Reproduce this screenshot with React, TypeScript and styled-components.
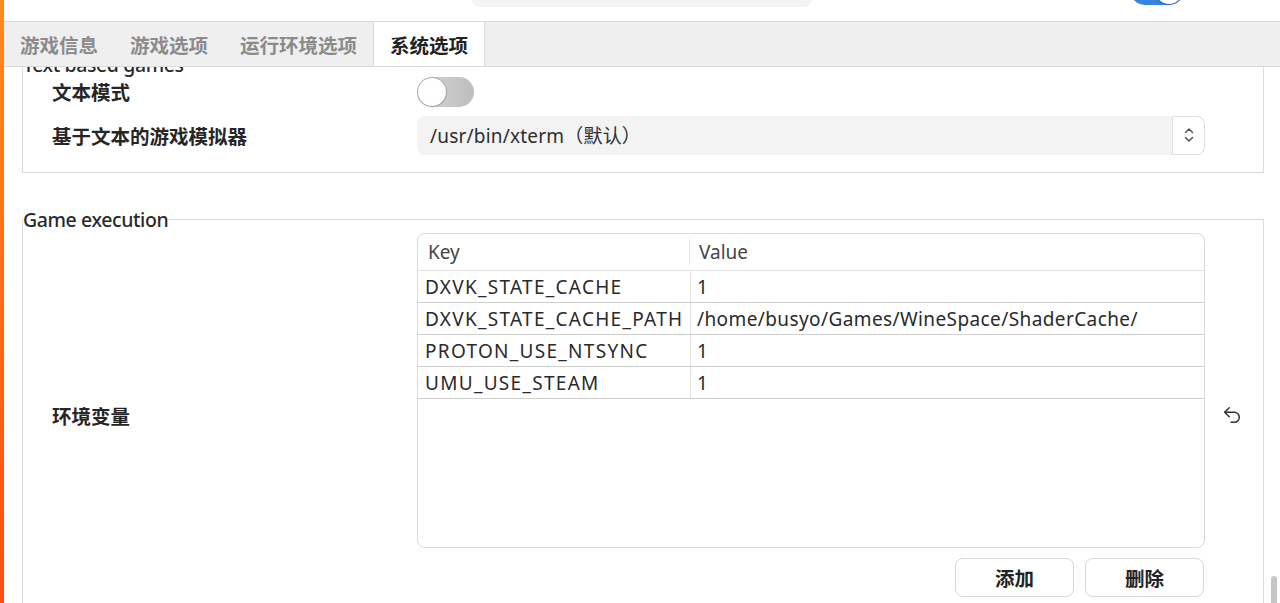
import styled, { createGlobalStyle } from 'styled-components';
import { Undo2 } from 'lucide-react';

const GlobalStyle = createGlobalStyle`
  html, body {
    margin: 0;
    padding: 0;
    height: 100%;
    overflow: hidden;
    background: #fff;
  }
  body {
    font-family: "Noto Sans", "Noto Sans CJK SC", sans-serif;
    color: #2a2a2a;
  }
  #root {
    height: 100%;
  }
`;

const envRows = [
  { key: 'DXVK_STATE_CACHE', value: '1' },
  { key: 'DXVK_STATE_CACHE_PATH', value: '/home/busyo/Games/WineSpace/ShaderCache/' },
  { key: 'PROTON_USE_NTSYNC', value: '1' },
  { key: 'UMU_USE_STEAM', value: '1' },
];

const tabs = ['游戏信息', '游戏选项', '运行环境选项', '系统选项'];

const App = () => {
  return (
    <Window>
      <GlobalStyle />
      <Stripe />
      <Main>
        <TopBar>
          <SearchField />
          <Switch $on $top>
            <Knob />
          </Switch>
        </TopBar>

        <TabBar>
          {tabs.map((t, i) => (
            <Tab key={t} $active={i === 3}>
              {t}
            </Tab>
          ))}
        </TabBar>

        <Scroller>
          <Content>
            <Group>
              <Legend>Text based games</Legend>
              <GroupBody $bottom={17.5} $top={2}>
                <Row>
                  <Label>文本模式</Label>
                  <Control>
                    <Switch>
                      <Knob />
                    </Switch>
                  </Control>
                  <Slot />
                </Row>
                <Row>
                  <Label>基于文本的游戏模拟器</Label>
                  <Combo>
                    <ComboField>/usr/bin/xterm（默认）</ComboField>
                    <Stepper>
                      <svg width="12" height="18" viewBox="0 0 12 18" fill="none">
                        <path d="M2.5 6.5 6 3l3.5 3.5" stroke="#555" strokeWidth="1.5" strokeLinecap="round" strokeLinejoin="round" />
                        <path d="M2.5 11.5 6 15l3.5-3.5" stroke="#555" strokeWidth="1.5" strokeLinecap="round" strokeLinejoin="round" />
                      </svg>
                    </Stepper>
                  </Combo>
                  <Slot />
                </Row>
              </GroupBody>
            </Group>

            <Group>
              <Legend>Game execution</Legend>
              <GroupBody $bottom={60} $top={3.5}>
                <Row>
                  <Label>环境变量</Label>
                  <Control $column>
                    <Table>
                      <HeadRow>
                        <HeadCell>Key</HeadCell>
                        <HeadSep />
                        <HeadCell $pad={9}>Value</HeadCell>
                      </HeadRow>
                      {envRows.map((r) => (
                        <BodyRow key={r.key}>
                          <Cell>{r.key}</Cell>
                          <Cell $value>{r.value}</Cell>
                        </BodyRow>
                      ))}
                    </Table>
                    <ButtonRow>
                      <Button>添加</Button>
                      <Button>删除</Button>
                    </ButtonRow>
                  </Control>
                  <Slot>
                    <Undo2 size={22} strokeWidth={1.6} color="#333" />
                  </Slot>
                </Row>
              </GroupBody>
            </Group>
          </Content>
          <ScrollThumb />
        </Scroller>
      </Main>
    </Window>
  );
};

const Window = styled.div`
  display: flex;
  height: 603px;
  overflow: hidden;
`;

const Stripe = styled.div`
  width: 4px;
  flex-shrink: 0;
  background: linear-gradient(180deg, #ff8a1e 0%, #ff6a16 50%, #ff4c14 100%);
`;

const Main = styled.div`
  flex: 1;
  min-width: 0;
  display: flex;
  flex-direction: column;
`;

const TopBar = styled.div`
  height: 21px;
  flex-shrink: 0;
  box-sizing: border-box;
  padding-bottom: 14px;
  display: flex;
  align-items: flex-end;
  overflow: hidden;
`;

const SearchField = styled.div`
  flex-shrink: 0;
  margin-left: 468px;
  width: 340px;
  height: 36px;
  border-radius: 8px;
  background: #f4f4f4;
`;

const Switch = styled.div<{ $on?: boolean; $top?: boolean }>`
  flex-shrink: 0;
  box-sizing: border-box;
  width: ${(p) => (p.$top ? 54 : 57)}px;
  height: 30px;
  border-radius: 15px;
  padding: 1px;
  display: flex;
  align-items: center;
  justify-content: ${(p) => (p.$on ? 'flex-end' : 'flex-start')};
  background: ${(p) =>
    p.$on ? '#3584e4' : 'linear-gradient(90deg, #d9d9d9 0%, #bcbcbc 100%)'};
  margin-left: ${(p) => (p.$top ? '318px' : '0')};
  margin-bottom: ${(p) => (p.$top ? '2px' : '0')};
`;

const Knob = styled.div`
  width: 28px;
  height: 28px;
  border-radius: 50%;
  background: #fff;
  box-shadow: 0 0 0 1px rgba(0, 0, 0, 0.18), 0 1px 2px rgba(0, 0, 0, 0.15);
`;

const TabBar = styled.div`
  height: 46px;
  flex-shrink: 0;
  box-sizing: border-box;
  display: flex;
  background: #efefef;
  border-top: 1px solid #d9d9d9;
  border-bottom: 1px solid #d9d9d9;
`;

const Tab = styled.div<{ $active?: boolean }>`
  display: flex;
  align-items: center;
  padding: 0 16px;
  font-size: 19.5px;
  font-weight: 700;
  color: ${(p) => (p.$active ? '#222' : '#8b8b8b')};
  background: ${(p) => (p.$active ? '#fff' : 'transparent')};
  border-left: ${(p) => (p.$active ? '1px solid #d9d9d9' : 'none')};
  border-right: ${(p) => (p.$active ? '1px solid #d9d9d9' : 'none')};
`;

const Scroller = styled.div`
  flex: 1;
  position: relative;
  overflow: hidden;
  padding: 0 16px 0 18px;
`;

const Content = styled.div`
  display: flex;
  flex-direction: column;
  gap: 36.5px;
  margin-top: -12.5px;
`;

const Group = styled.fieldset`
  margin: 0;
  padding: 0;
  min-width: 0;
  border: 1px solid #dcdcdc;
`;

const Legend = styled.legend`
  padding: 0;
  font-size: 19.5px;
  line-height: 20px;
  font-weight: 500;
  letter-spacing: -0.4px;
  color: #2a2a2a;
`;

const GroupBody = styled.div<{ $top: number; $bottom: number }>`
  display: flex;
  flex-direction: column;
  gap: 9px;
  padding: ${(p) => p.$top}px 0 ${(p) => p.$bottom}px 29px;
`;

const Row = styled.div`
  display: grid;
  grid-template-columns: 365px 1fr 58px;
  align-items: center;
`;

const Label = styled.div`
  font-size: 19.5px;
  font-weight: 700;
  color: #262626;
`;

const Control = styled.div<{ $column?: boolean }>`
  display: flex;
  flex-direction: ${(p) => (p.$column ? 'column' : 'row')};
  min-width: 0;
`;

const Slot = styled.div`
  display: flex;
  justify-content: center;
  padding-right: 4px;
`;

const Combo = styled.div`
  display: flex;
  height: 39px;
`;

const ComboField = styled.div`
  flex: 1;
  display: flex;
  align-items: center;
  padding-left: 13px;
  background: #f3f3f3;
  border-radius: 8px 0 0 8px;
  font-size: 19px;
  letter-spacing: 0.2px;
  color: #2e2e2e;
`;

const Stepper = styled.div`
  width: 33px;
  box-sizing: border-box;
  display: flex;
  align-items: center;
  justify-content: center;
  background: #fff;
  border: 1px solid #dedede;
  border-radius: 0 8px 8px 0;
`;

const Table = styled.div`
  height: 315px;
  box-sizing: border-box;
  border: 1px solid #dadada;
  border-radius: 8px;
  overflow: hidden;
  display: flex;
  flex-direction: column;
`;

const HeadRow = styled.div`
  height: 37px;
  flex-shrink: 0;
  box-sizing: border-box;
  display: grid;
  grid-template-columns: 271px 1px 1fr;
  align-items: center;
  border-bottom: 1px solid #e3e3e3;
`;

const HeadCell = styled.div<{ $pad?: number }>`
  padding-left: ${(p) => p.$pad ?? 10}px;
  font-size: 19px;
  color: #454545;
`;

const HeadSep = styled.div`
  height: 26px;
  background: #e2e2e2;
`;

const BodyRow = styled.div`
  height: 32px;
  flex-shrink: 0;
  box-sizing: border-box;
  display: grid;
  grid-template-columns: 272px 1fr;
  border-bottom: 1px solid #cfcfcf;
`;

const Cell = styled.div<{ $value?: boolean }>`
  display: flex;
  align-items: center;
  padding-left: ${(p) => (p.$value ? 6 : 7)}px;
  border-left: ${(p) => (p.$value ? '1px solid #e4e4e4' : 'none')};
  font-size: 19px;
  letter-spacing: ${(p) => (p.$value ? 0.4 : 1.3)}px;
  color: #2a2a2a;
  white-space: nowrap;
`;

const ButtonRow = styled.div`
  display: flex;
  justify-content: flex-end;
  gap: 11px;
  margin-top: 10px;
  padding-right: 1px;
`;

const Button = styled.button`
  width: 119px;
  height: 39px;
  border: 1px solid #d8d8d8;
  border-radius: 8px;
  background: #fff;
  font-family: inherit;
  font-size: 19.5px;
  font-weight: 700;
  color: #222;
`;

const ScrollThumb = styled.div`
  position: absolute;
  right: 3px;
  bottom: -4px;
  width: 6px;
  height: 31px;
  border-radius: 3px;
  background: #c6c6c6;
`;

export default App;
